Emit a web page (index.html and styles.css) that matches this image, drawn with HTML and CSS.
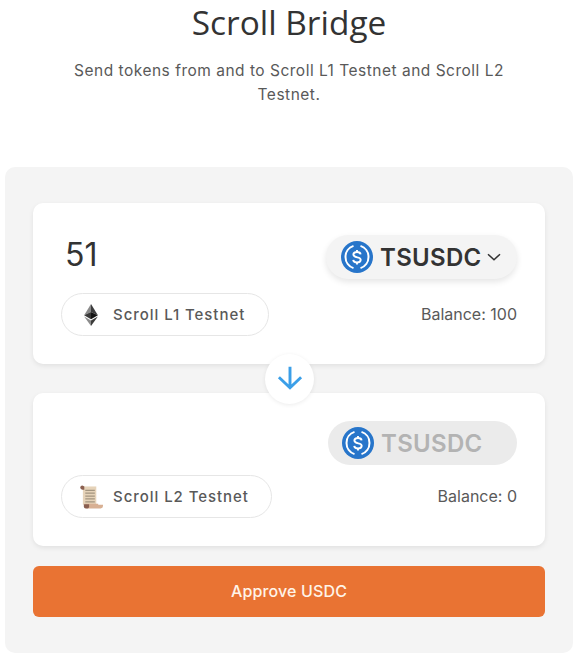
FILE: index.html
```html
<!DOCTYPE html>
<html>
<head>
<link rel="stylesheet" href="styles.css">
</head>
<body>

<div class="header">
  <h1>Scroll Bridge</h1>
  <p>Send tokens from and to Scroll L1 Testnet and Scroll L2 Testnet.</p>
</div>

<svg width="0" height="0" class="defs">
  <symbol id="usdc" viewBox="0 0 32 32">
    <circle cx="16" cy="16" r="16" fill="#2775ca"/>
    <path d="M12.5 4.900a11.700 11.700 0 0 0 0 22.200M19.500 4.900a11.700 11.700 0 0 1 0 22.200" fill="none" stroke="#fff" stroke-width="2"/>
    <path d="M19.600 13.400c-.2-1.700-1.600-2.400-3.600-2.400-2.100 0-3.600 1-3.600 2.600 0 3.900 7.300 1.700 7.300 5.100 0 1.600-1.600 2.700-3.700 2.700-2.200 0-3.600-.9-3.800-2.600M16 9v2M16 21.400v2" fill="none" stroke="#fff" stroke-width="1.900"/>
  </symbol>
</svg>

<div class="panel">
  <div class="card card-from">
    <div class="row">
      <div class="amount">51</div>
      <div class="token token-active">
        <svg class="token-icon"><use href="#usdc"/></svg>
        <span>TSUSDC</span>
        <svg class="chevron" viewBox="0 0 14 8"><path d="M1 1.200 7 6.800l6-5.600" fill="none" stroke="#333" stroke-width="1.500"/></svg>
      </div>
    </div>
    <div class="row row-bottom">
      <div class="network">
        <svg class="network-icon" viewBox="0 0 20 32">
          <path d="M10 0 0 16.300l10-4.500z" fill="#8a8a8a"/>
          <path d="M10 0l10 16.300-10-4.500z" fill="#3c3c3d"/>
          <path d="M10 11.800 0 16.300l10 5.900z" fill="#393939"/>
          <path d="M10 11.800l10 4.500-10 5.900z" fill="#141414"/>
          <path d="M0 18.200 10 32v-8z" fill="#8c8c8c"/>
          <path d="M20 18.200 10 32v-8z" fill="#3c3c3b"/>
        </svg>
        <span>Scroll L1 Testnet</span>
      </div>
      <div class="balance">Balance: 100</div>
    </div>
  </div>

  <div class="swap">
    <svg viewBox="0 0 24 24"><path d="M12 1.500v18M2.500 10.500l9.500 9 9.500-9" fill="none" stroke="#3b9fe8" stroke-width="2.500"/></svg>
  </div>

  <div class="card card-to">
    <div class="row">
      <div class="amount"></div>
      <div class="token token-disabled">
        <svg class="token-icon"><use href="#usdc"/></svg>
        <span>TSUSDC</span>
      </div>
    </div>
    <div class="row row-bottom">
      <div class="network network-l2">
        <svg class="network-icon scroll-icon" viewBox="0 0 24 24">
          <path d="M3 1h14v19H3z" fill="#e6d3b9"/>
          <path d="M5 19h14v1h5v1.500a2.500 2.500 0 0 1-2.500 2.500H7z" fill="#d8b093"/>
          <path d="M2.500 0a2.200 2.200 0 0 0 0 4.400H4.500V1z" fill="#8a5f50"/>
          <path d="M4 19.500h5.500v2.500a2 2 0 0 1-2 2H6a2 2 0 0 1-2-2z" fill="#8a5f50"/>
          <path d="M5.500 5h10M5.500 8h10M5.500 11h10M5.500 14h10M5.500 17h10" stroke="#a39580" stroke-width="1.300"/>
        </svg>
        <span>Scroll L2 Testnet</span>
      </div>
      <div class="balance">Balance: 0</div>
    </div>
  </div>

  <button class="approve">Approve USDC</button>
</div>

</body>
</html>
```

FILE: styles.css
```css
* {box-sizing: border-box;}

body {
  margin: 0;
  background: #fff;
  font-family: Inter, "Noto Sans", sans-serif;
  color: #333;
}

.defs {
  position: absolute;
}

.header {
  text-align: center;
  padding: 0 60px 0 64px;
  height: 167px;
}

.header h1 {
  margin: 0;
  padding-top: 2px;
  font-family: "Open Sans", sans-serif;
  font-size: 33.400px;
  line-height: 40px;
  font-weight: 400;
  color: #333;
}

.header p {
  margin: 17px 0 0;
  font-size: 15.500px;
  line-height: 24px;
  letter-spacing: 0.5px;
  color: #595959;
}

.panel {
  position: relative;
  margin: 0 1px 0 5px;
  height: 486px;
  padding: 36px 28px;
  background: #f4f4f4;
  border-radius: 10px;
}

.card {
  padding: 32px 28px 28px;
  background: #fff;
  border-radius: 10px;
  box-shadow: 0 2px 5px rgba(0, 0, 0, 0.08);
}

.card-from {
  height: 161px;
}

.card-to {
  height: 153px;
  margin-top: 29px;
  padding-top: 28px;
}

.row {
  display: flex;
  align-items: center;
  justify-content: space-between;
}

.row-bottom {
  margin-top: 14px;
}

.card-to .row-bottom {
  margin-top: 10px;
}

.amount {
  padding-left: 4px;
  margin-bottom: 4px;
  font-size: 32px;
  line-height: 40px;
  color: #333;
}

.token {
  display: flex;
  align-items: center;
  height: 44px;
  padding: 0 14px;
  border-radius: 22px;
  font-size: 24px;
  font-weight: 600;
  letter-spacing: 0.3px;
}

.token-active {
  width: 191px;
  padding-left: 15px;
  background: #f4f4f4;
  box-shadow: 0 3px 6px rgba(0, 0, 0, 0.1);
}

.token-disabled {
  width: 189px;
  background: #ebebeb;
  color: #b3b3b3;
}

.token-icon {
  width: 32px;
  height: 32px;
  margin-right: 7px;
  flex: none;
}

.chevron {
  width: 14px;
  height: 8px;
  margin-left: 5px;
}

.network {
  display: flex;
  align-items: center;
  width: 208px;
  height: 43px;
  padding-left: 21px;
  background: #fff;
  border: 1px solid #e6e6e6;
  border-radius: 22px;
  font-size: 15px;
  font-weight: 500;
  letter-spacing: 0.95px;
  color: #595959;
}

.network-l2 {
  width: 211px;
}

.network-icon {
  width: 16px;
  height: 22px;
  margin-right: 14px;
  flex: none;
}

.scroll-icon {
  width: 23px;
  height: 24px;
  margin-left: -3px;
  margin-right: 10px;
}

.balance {
  margin-bottom: 2px;
  font-size: 16px;
  color: #595959;
}

.swap {
  position: absolute;
  left: 260px;
  top: 187px;
  display: flex;
  align-items: center;
  justify-content: center;
  width: 49px;
  height: 50px;
  background: #fff;
  border-radius: 50%;
  box-shadow: 0 1px 4px rgba(0, 0, 0, 0.08);
}

.swap svg {
  width: 28px;
  height: 28px;
  flex: none;
}

.approve {
  display: block;
  width: 100%;
  height: 51px;
  margin-top: 20px;
  padding-bottom: 3px;
  border: 0;
  border-radius: 6px;
  background: #e97333;
  color: #fff4e8;
  font-family: inherit;
  font-size: 16px;
  font-weight: 500;
  letter-spacing: 0.15px;
}
```
